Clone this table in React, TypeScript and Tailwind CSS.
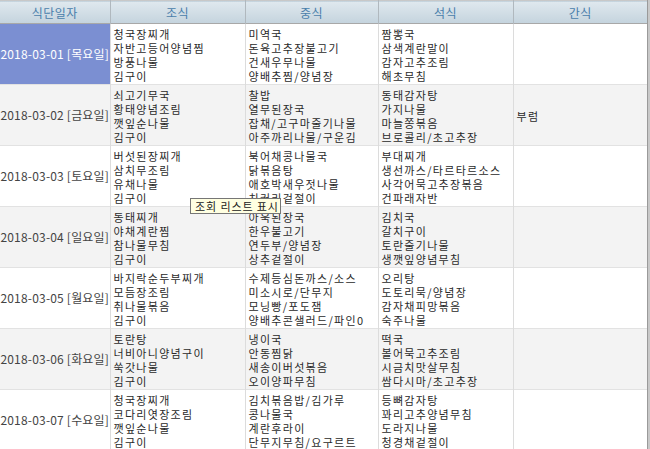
import React from "react";

type Row = {
  date: string;
  breakfast: string[];
  lunch: string[];
  dinner: string[];
  snack: string[];
};

const rows: Row[] = [
  {
    date: "2018-03-01 [목요일]",
    breakfast: ["청국장찌개", "자반고등어양념찜", "방풍나물", "김구이"],
    lunch: ["미역국", "돈육고추장불고기", "건새우무나물", "양배추찜/양념장"],
    dinner: ["짬뽕국", "삼색계란말이", "감자고추조림", "해초무침"],
    snack: [],
  },
  {
    date: "2018-03-02 [금요일]",
    breakfast: ["쇠고기무국", "황태양념조림", "깻잎순나물", "김구이"],
    lunch: ["찰밥", "열무된장국", "잡채/고구마줄기나물", "아주까리나물/구운김"],
    dinner: ["동태감자탕", "가지나물", "마늘쫑볶음", "브로콜리/초고추장"],
    snack: ["부럼"],
  },
  {
    date: "2018-03-03 [토요일]",
    breakfast: ["버섯된장찌개", "삼치무조림", "유채나물", "김구이"],
    lunch: ["북어채콩나물국", "닭볶음탕", "애호박새우젓나물", "치커리겉절이"],
    dinner: ["부대찌개", "생선까스/타르타르소스", "사각어묵고추장볶음", "건파래자반"],
    snack: [],
  },
  {
    date: "2018-03-04 [일요일]",
    breakfast: ["동태찌개", "야채계란찜", "참나물무침", "김구이"],
    lunch: ["아욱된장국", "한우불고기", "연두부/양념장", "상추겉절이"],
    dinner: ["김치국", "갈치구이", "토란줄기나물", "생깻잎양념무침"],
    snack: [],
  },
  {
    date: "2018-03-05 [월요일]",
    breakfast: ["바지락순두부찌개", "모듬장조림", "취나물볶음", "김구이"],
    lunch: ["수제등심돈까스/소스", "미소시로/단무지", "모닝빵/포도잼", "양배추콘샐러드/파인0"],
    dinner: ["오리탕", "도토리묵/양념장", "감자채피망볶음", "숙주나물"],
    snack: [],
  },
  {
    date: "2018-03-06 [화요일]",
    breakfast: ["토란탕", "너비아니양념구이", "쑥갓나물", "김구이"],
    lunch: ["냉이국", "안동찜닭", "새송이버섯볶음", "오이양파무침"],
    dinner: ["떡국", "볼어묵고추조림", "시금치맛살무침", "쌈다시마/초고추장"],
    snack: [],
  },
  {
    date: "2018-03-07 [수요일]",
    breakfast: ["청국장찌개", "코다리엿장조림", "깻잎순나물", "김구이"],
    lunch: ["김치볶음밥/김가루", "콩나물국", "계란후라이", "단무지무침/요구르트"],
    dinner: ["등뼈감자탕", "꽈리고추양념무침", "도라지나물", "청경채겉절이"],
    snack: [],
  },
];

const headers = ["식단일자", "조식", "중식", "석식", "간식"];

const MenuCell = ({ items, last }: { items: string[]; last?: boolean }) => (
  <td
    className={`align-middle px-[3px] pt-[1px] overflow-hidden whitespace-nowrap ${
      last ? "" : "border-r border-[#dcdcdc]"
    }`}
  >
    {items.map((item, i) => (
      <div key={i} className="text-[11px] leading-[14px] h-[14px] tracking-[1.3px]">
        {item}
      </div>
    ))}
  </td>
);

export default function App() {
  return (
    <div
      className="relative w-[650px] h-[449px] overflow-hidden bg-white text-[12px] text-[#2a2a2a]"
      style={{ fontFamily: '"Noto Sans CJK KR", "Noto Sans", sans-serif' }}
    >
      <div className="flex">
        <table className="table-fixed border-collapse w-[647px]">
          <colgroup>
            <col className="w-[110px]" />
            <col className="w-[135px]" />
            <col className="w-[133px]" />
            <col className="w-[135px]" />
            <col className="w-[134px]" />
          </colgroup>
          <thead>
            <tr className="h-[23px] bg-gradient-to-b from-[#dfe8ee] to-[#c5d4de] border-t border-[#c8c8c8] border-b border-b-[#a8a8a8]">
              {headers.map((h, i) => (
                <th
                  key={h}
                  className={`font-normal text-[12px] text-[#4a7eab] text-center leading-[21px] tracking-[0.5px] ${
                    i < headers.length - 1 ? "border-r border-[#b0b8be]" : ""
                  }`}
                >
                  {h}
                </th>
              ))}
            </tr>
          </thead>
          <tbody>
            {rows.map((r, idx) => (
              <tr
                key={r.date}
                className={`h-[61px] border-b border-[#e2e2e2] ${
                  idx % 2 === 1 ? "bg-[#f3f3f3]" : "bg-white"
                }`}
              >
                <td
                  className={`text-center align-middle whitespace-nowrap border-r border-[#dcdcdc] tracking-[0.2px] ${
                    idx === 0 ? "bg-[#7b8fd2] text-white" : "text-[#444]"
                  }`}
                >
                  {r.date}
                </td>
                <MenuCell items={r.breakfast} />
                <MenuCell items={r.lunch} />
                <MenuCell items={r.dinner} />
                <MenuCell items={r.snack} last />
              </tr>
            ))}
          </tbody>
        </table>
        <div className="w-[3px] h-[449px] bg-[#c8c8c8] border-l border-[#9a9a9a]" />
      </div>

      <div className="absolute left-[190px] top-[198px] h-[16px] w-[91px] px-[4px] bg-[#ffffe1] border border-[#767676] text-[11px] leading-[14px] text-[#222] tracking-[0.9px] whitespace-nowrap">
        조회 리스트 표시
      </div>
    </div>
  );
}
